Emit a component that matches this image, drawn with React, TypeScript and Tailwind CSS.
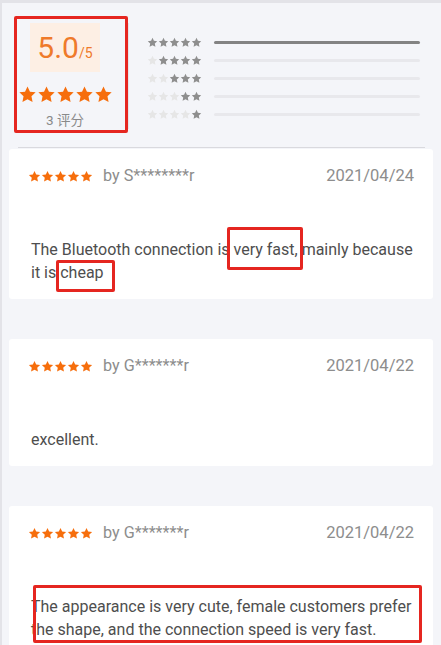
import React from 'react';

const STAR = 'M12 1.8l3.1 6.6 7.2.9-5.3 5 1.4 7.1L12 17.9l-6.4 3.5 1.4-7.1-5.3-5 7.2-.9z';

function Star({ size, color }: { size: number; color: string }) {
  return (
    <svg width={size} height={size} viewBox="0 0 24 24" className="shrink-0">
      <path d={STAR} fill={color} />
    </svg>
  );
}

function Stars({ n, size, on, off, gap = 0 }: { n: number; size: number; on: string; off?: string; gap?: number }) {
  return (
    <div className="flex items-center" style={{ gap }}>
      {[0, 1, 2, 3, 4].map((i) => (
        <Star key={i} size={size} color={i >= 5 - n ? on : off ?? on} />
      ))}
    </div>
  );
}

const reviews = [
  {
    user: 'by S********r',
    date: '2021/04/24',
    text: 'The Bluetooth connection is very fast, mainly because it is cheap',
  },
  { user: 'by G*******r', date: '2021/04/22', text: 'excellent.' },
  {
    user: 'by G*******r',
    date: '2021/04/22',
    text: 'The appearance is very cute, female customers prefer the shape, and the connection speed is very fast.',
  },
];

export default function App() {
  return (
    <div
      className="relative min-h-[645px] w-[441px] overflow-hidden bg-[#f4f5f9] border-l-2 border-t-[3px] border-[#e3e3e8]"
      style={{ fontFamily: 'Roboto, "Noto Sans CJK SC", sans-serif' }}
    >
      {/* summary */}
      <div className="flex h-[144px]">
        <div className="flex w-[126px] flex-col items-center pt-[20px]">
          <div className="flex h-[49px] w-[70px] items-center justify-center bg-[#fdefe4] text-[#ef7a2a]">
            <span className="text-[30px] leading-none">5.0</span>
            <span className="mt-[10px] text-[14px] leading-none">/5</span>
          </div>
          <div className="mt-[13px]">
            <Stars n={5} size={19} on="#f66e0c" />
          </div>
          <div className="mt-[7px] text-[13.5px] leading-[18px] text-[#8a8a8a]">3 评分</div>
        </div>
        <div className="mt-[20px] h-[106px] w-px bg-[#e4e4ea]" />
        <div className="flex flex-1 flex-col pl-[18px] pr-[21px] pt-[34px] gap-[7px]">
          {[5, 4, 3, 2, 1].map((n) => (
            <div key={n} className="flex h-[11px] items-center">
              <Stars n={n} size={11} on="#8e8e8e" off="#e6e6e6" />
              <div className={`ml-[12px] h-[3px] flex-1 rounded-full ${n === 5 ? 'bg-[#838383]' : 'bg-[#e8e8ec]'}`} />
            </div>
          ))}
        </div>
      </div>
      <div className="mx-[16px] h-px bg-[#d9d9de]" />

      {/* reviews */}
      <div className="ml-[7px] mr-[8px] mt-[1px] flex flex-col gap-[40px]">
        {reviews.map((r, i) => (
          <div key={i} className="rounded-[3px] bg-white px-[19px] pb-[15px] pt-[17px]">
            <div className="flex h-5 items-center">
              <Stars n={5} size={13} on="#f66e0c" gap={-0.5} />
              <span className="ml-[10px] text-[16.2px] text-[#8d8d8d]">{r.user}</span>
              <span className="ml-auto text-[16.5px] text-[#8d8d8d]">{r.date}</span>
            </div>
            <p className="mt-[52px] pl-[3px] text-[16px] leading-[23px] text-[#4e4e4e]">{r.text}</p>
          </div>
        ))}
      </div>

      {/* red annotation boxes */}
      <div className="absolute left-[225px] top-[224px] h-[43px] w-[76px] rounded-[2px] border-[3px] border-[#e52620]" />
      <div className="absolute left-[12px] top-[13px] h-[117px] w-[114px] rounded-[2px] border-[3px] border-[#e52620]" />
      <div className="absolute left-[54px] top-[257px] h-[32px] w-[59px] rounded-[2px] border-[3px] border-[#e52620]" />
      <div className="absolute left-[31px] top-[582px] h-[58px] w-[389px] rounded-[2px] border-[3px] border-[#e52620]" />
    </div>
  );
}
